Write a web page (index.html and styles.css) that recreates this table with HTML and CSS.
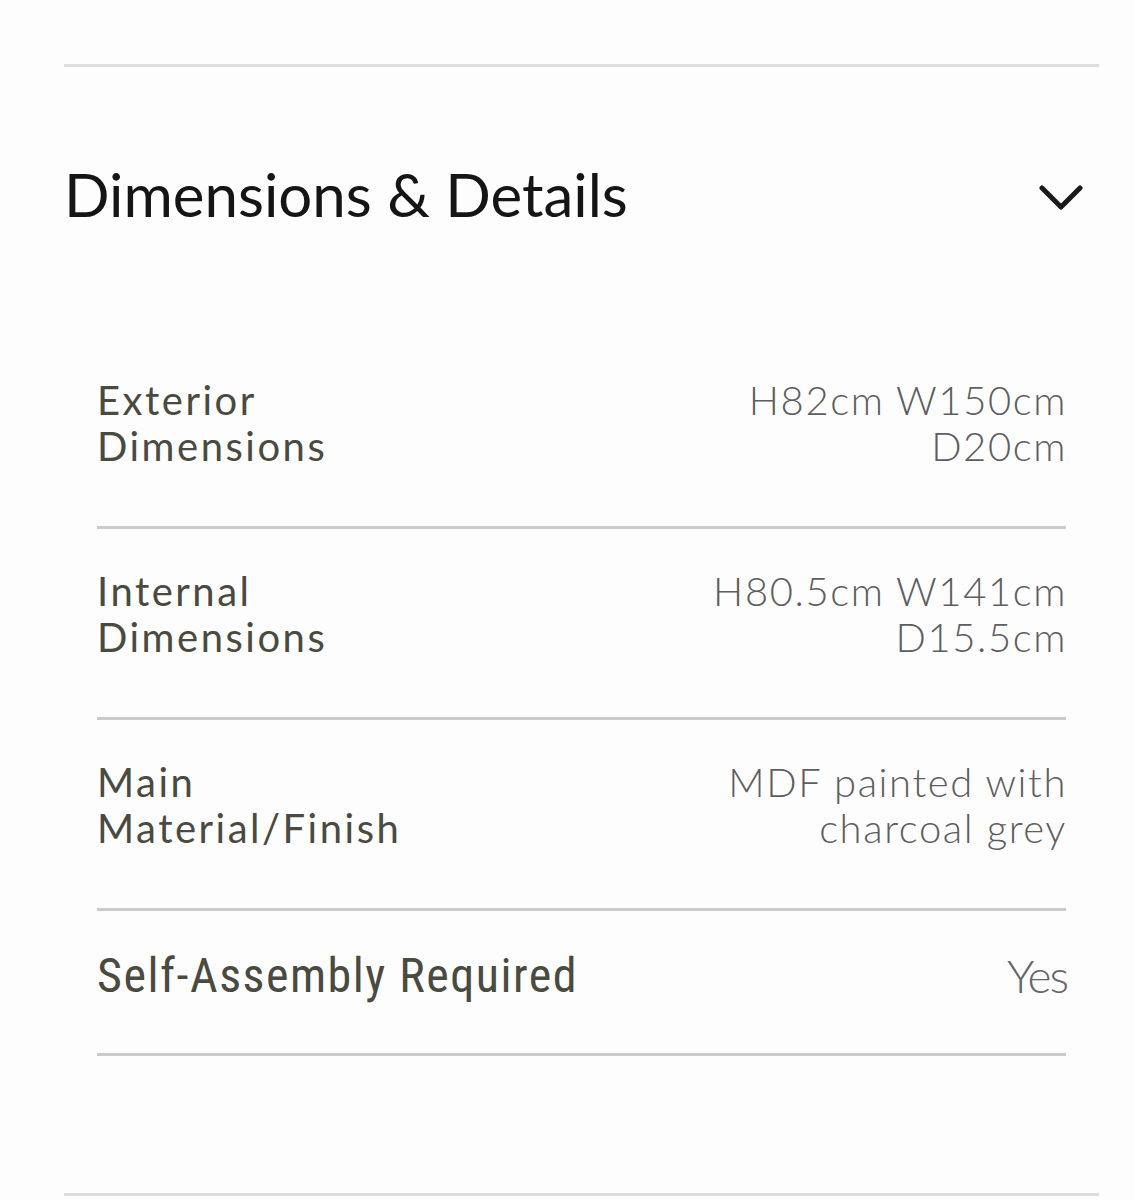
FILE: index.html
```html
<!DOCTYPE html>
<html lang="en">
<head>
    <meta charset="UTF-8">
    <meta name="viewport" content="width=device-width, initial-scale=1.0">
    <title>Dimensions &amp; Details</title>
    <link rel="stylesheet" href="styles.css">
</head>
<body>
    <section class="details">
        <div class="details-header">
            <h2 class="details-title">Dimensions &amp; Details</h2>
            <svg class="chevron" width="44" height="28" viewBox="0 0 44 28" aria-hidden="true">
                <path d="M3 4 L22 23 L41 4" fill="none" stroke="#1a1a1a" stroke-width="5" stroke-linecap="round" stroke-linejoin="round"/>
            </svg>
        </div>

        <div class="spec-list">
            <div class="spec-row">
                <div class="spec-label">Exterior Dimensions</div>
                <div class="spec-value">H82cm W150cm D20cm</div>
            </div>
            <div class="spec-row">
                <div class="spec-label">Internal Dimensions</div>
                <div class="spec-value">H80.5cm W141cm D15.5cm</div>
            </div>
            <div class="spec-row">
                <div class="spec-label">Main Material/Finish</div>
                <div class="spec-value">MDF painted with charcoal grey</div>
            </div>
            <div class="spec-row spec-row-wide">
                <div class="spec-label">Self-Assembly Required</div>
                <div class="spec-value">Yes</div>
            </div>
        </div>
    </section>
</body>
</html>
```

FILE: styles.css
```css
body {
    margin: 0;
    background: #fdfdfd;
    font-family: Lato, "Open Sans", sans-serif;
}
.details {
    margin: 64px 35px 0 64px;
    border-top: 3px solid #dddddd;
    border-bottom: 3px solid #dddddd;
    padding-bottom: 137px;
}
.details-header {
    display: flex;
    align-items: center;
    justify-content: space-between;
    margin-top: 91px;
    padding-right: 16px;
}
.details-title {
    margin: 0;
    font-size: 60px;
    font-weight: 400;
    line-height: 72px;
    color: #151515;
    letter-spacing: 0;
}
.chevron {
    margin-top: 8px;
}
.spec-list {
    margin: 108px 33px 0 33px;
}
.spec-row {
    display: flex;
    justify-content: space-between;
    padding: 39px 0 57px;
    border-bottom: 3px solid #cbcbcb;
    font-size: 40px;
    line-height: 46px;
}
.spec-label {
    max-width: 360px;
    color: #4a4a40;
    letter-spacing: 2.5px;
}
.spec-value {
    max-width: 370px;
    margin-right: -1px;
    text-align: right;
    color: #5e5e5e;
    font-weight: 300;
    letter-spacing: 1.6px;
}
.spec-row-wide {
    padding: 42px 0 54px;
}
.spec-row-wide .spec-label {
    max-width: none;
    font-family: "Roboto Condensed", "Liberation Sans Narrow", sans-serif;
    font-stretch: condensed;
    font-size: 48px;
    letter-spacing: 1.5px;
}
.spec-row-wide .spec-value {
    font-size: 46px;
    letter-spacing: -2px;
    color: #666666;
}
```
